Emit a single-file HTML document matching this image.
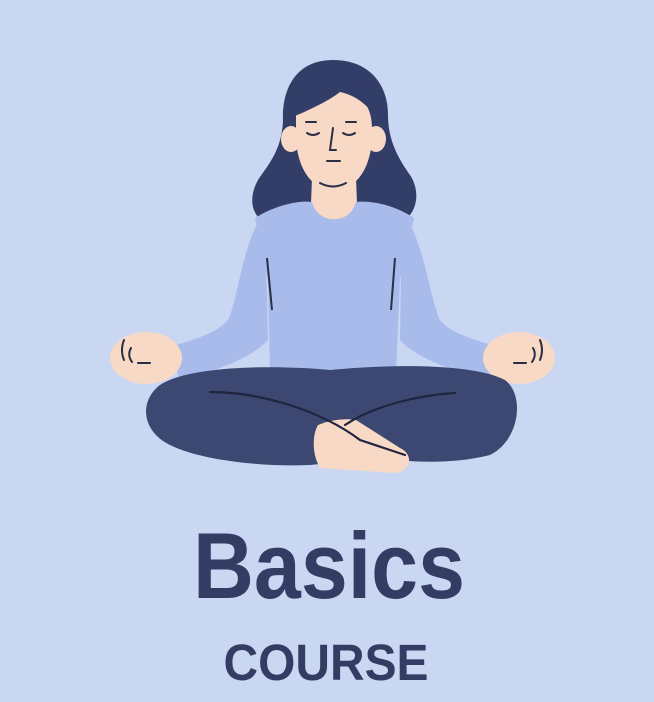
<!DOCTYPE html>
<html><head><meta charset="utf-8"><style>
html,body{margin:0;padding:0;background:#c9d7f3;}
svg{display:block}
</style></head><body>
<svg width="654" height="702" viewBox="0 0 654 702" xmlns="http://www.w3.org/2000/svg">
<rect width="654" height="702" fill="#c9d7f3"/>
<!-- hair back -->
<path d="M333 60 C295 60 282 90 283 120 C282 150 268 165 258 180 C248 198 252 214 262 220 L405 220 C418 210 420 190 410 175 C398 158 388 140 388 115 C388 85 370 60 333 60 Z" fill="#333e68"/>
<!-- neck -->
<path d="M312 178 L356 178 L358 228 L310 228 Z" fill="#f7d9c6"/>
<!-- ears -->
<ellipse cx="291" cy="139" rx="10" ry="13" fill="#f7d9c6"/>
<ellipse cx="376" cy="139" rx="10" ry="13" fill="#f7d9c6"/>
<!-- face -->
<path d="M296 115 C296 90 310 90 340 92 C366 94 373 110 372 135 C372 165 358 190 334 190 C310 190 296 165 296 135 Z" fill="#f7d9c6"/>
<!-- bangs -->
<path d="M290 118 C295 80 320 65 345 72 C370 80 384 100 380 125 C370 105 355 95 340 92 C330 100 310 110 290 118 Z" fill="#333e68"/>
<!-- face lines -->
<g stroke="#2a2f45" stroke-width="2" fill="none" stroke-linecap="round">
<path d="M306 122 L316 122 M346 122 L356 122"/>
<path d="M307 133 Q313 137 319 133 M343 133 Q349 137 355 133"/>
<path d="M333 128 L330 150 L336 150"/>
<path d="M327 161 L340 161"/>
<path d="M320 183 Q333 190 346 183"/>
</g>
<!-- arms -->
<path d="M265 215 C245 230 238 300 228 320 C215 335 190 340 168 348 L180 380 C210 372 250 360 268 340 Z" fill="#a8bbeb"/>
<path d="M402 215 C422 230 430 300 440 320 C452 335 478 340 500 348 L488 380 C458 372 418 360 400 340 Z" fill="#a8bbeb"/>
<!-- torso -->
<path d="M255 218 C275 205 300 200 312 202 C318 225 350 225 356 202 C370 200 395 205 414 218 L400 280 L396 372 L270 372 L268 280 Z" fill="#a8bbeb"/>
<g stroke="#2a2f45" stroke-width="2" fill="none">
<path d="M267 258 L272 310 M395 258 L391 310"/>
</g>
<!-- hands -->
<ellipse cx="146" cy="358" rx="36" ry="26" fill="#f7d9c6"/>
<ellipse cx="519" cy="358" rx="36" ry="26" fill="#f7d9c6"/>
<g stroke="#2a2f45" stroke-width="2" fill="none" stroke-linecap="round">
<path d="M124 340 Q120 350 124 360 M131 348 Q127 355 132 362 M138 363 L150 363"/>
<path d="M540 340 Q544 350 540 360 M533 348 Q537 355 532 362 M526 363 L514 363"/>
</g>
<!-- legs -->
<path d="M160 385 C190 365 280 365 330 370 C380 365 470 362 505 380 C525 395 520 440 490 455 C450 465 410 462 380 458 L310 465 C260 467 200 460 170 445 C140 430 140 400 160 385 Z" fill="#3c4871"/>
<!-- foot -->
<path d="M318 425 C330 420 345 418 356 420 L400 448 C415 455 410 472 395 473 L320 468 C312 455 312 435 318 425 Z" fill="#f7d9c6"/>
<g stroke="#1f2540" stroke-width="2.2" fill="none" stroke-linecap="round">
<path d="M210 392 C260 392 320 410 360 440 L405 455"/>
<path d="M345 425 C375 405 420 395 455 393"/>
</g>
<!-- text -->
<text x="329" y="598" text-anchor="middle" font-family="Liberation Sans, sans-serif" font-weight="bold" font-size="94" fill="#333d63" textLength="272" lengthAdjust="spacingAndGlyphs">Basics</text>
<text x="326" y="680" text-anchor="middle" font-family="Liberation Sans, sans-serif" font-weight="bold" font-size="51" fill="#333d63" textLength="205" lengthAdjust="spacingAndGlyphs">COURSE</text>
</svg>
</body></html>
